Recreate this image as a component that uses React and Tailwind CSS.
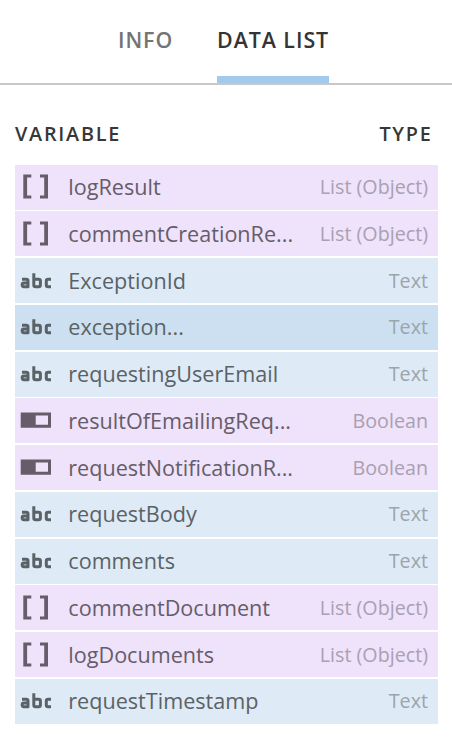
const rows = [
  ["list", "logResult"],
  ["list", "commentCreationRe..."],
  ["text", "ExceptionId"],
  ["text", "exception...", true],
  ["text", "requestingUserEmail"],
  ["bool", "resultOfEmailingReq..."],
  ["bool", "requestNotificationR..."],
  ["text", "requestBody"],
  ["text", "comments"],
  ["list", "commentDocument"],
  ["list", "logDocuments"],
  ["text", "requestTimestamp"],
];
const labels = { list: "List (Object)", text: "Text", bool: "Boolean" };

function Icon({ kind }) {
  return (
    <svg width="32" height="28" viewBox="0 0 32 28" fill="none" stroke="#655d69" className="shrink-0">
      {kind === "list" && (
        <path d="M3.3 1.5h8v3h-4.2v18h4.2v3h-8zM28 1.5h-8v3h4.2v18H20v3h8z" fill="#655d69" stroke="none" />
      )}
      {kind === "bool" && (
        <path d="M.7 5.5H31v15.3H.7zM15.7 8.5v9.3H28V8.5z" fill="#655d69" stroke="none" fillRule="evenodd" />
      )}
      {kind === "text" && (
        <g strokeWidth="3" stroke="#5a6266" strokeLinejoin="round">
          <path d="M2 12.2h4.2q1.8 0 1.8 1.8v5.7H3.8q-1.6 0-1.6-1.6v-.5q0-1.5 1.6-1.5H8" />
          <path d="M13.8 6.2v11.7q0 1.8 1.8 1.8h3q1.8 0 1.8-1.8V14q0-1.8-1.8-1.8h-4.8" />
          <path d="M31 12.2h-2.8q-1.9 0-1.9 1.8v3.9q0 1.8 1.9 1.8H31" />
        </g>
      )}
    </svg>
  );
}

export default function App() {
  return (
    <div className="h-[740px] w-[452px] overflow-hidden bg-white font-['Open_Sans',sans-serif]">
      <div className="flex h-[85px] gap-[44px] border-b-2 border-[#c8c8c8] pl-[118px] text-[21.4px] leading-[28px]">
        <div className="w-[55px] pt-[26px] font-semibold tracking-[0.9px] text-[#747474]">INFO</div>
        <div className="h-[83px] w-[112px] whitespace-nowrap border-b-[7px] border-[#a1caec] pt-[26px] font-semibold tracking-[0.95px] text-[#343434]">DATA LIST</div>
      </div>
      <div className="flex h-[79.5px] justify-between pr-[19.5px] pl-[15px] pt-[35px] text-[19.8px] leading-[28px] font-semibold tracking-[1.75px] text-[#373737]">
        <span>VARIABLE</span>
        <span>TYPE</span>
      </div>
      <div className="ml-[15px] flex w-[423px] flex-col gap-[1.78px]">
        {rows.map(([kind, name, active]) => (
          <div
            key={name}
            className={`flex h-[45px] items-center pr-[10px] pl-[5px] ${active ? "bg-[#cce0f1]" : kind === "text" ? "bg-[#deeaf6]" : "bg-[#efe2fb]"}`}
          >
            <Icon kind={kind} />
            <span className={`ml-[16.3px] grow text-[21.6px] leading-[30px] whitespace-nowrap ${kind === "text" ? "text-[#5a6266]" : "text-[#655d69]"}`}>{name}</span>
            <span className={`text-[19.7px] leading-[28px] whitespace-nowrap ${kind === "text" ? "text-[#9ba5ab]" : "text-[#a9a0b1]"}`}>{labels[kind]}</span>
          </div>
        ))}
      </div>
    </div>
  );
}
